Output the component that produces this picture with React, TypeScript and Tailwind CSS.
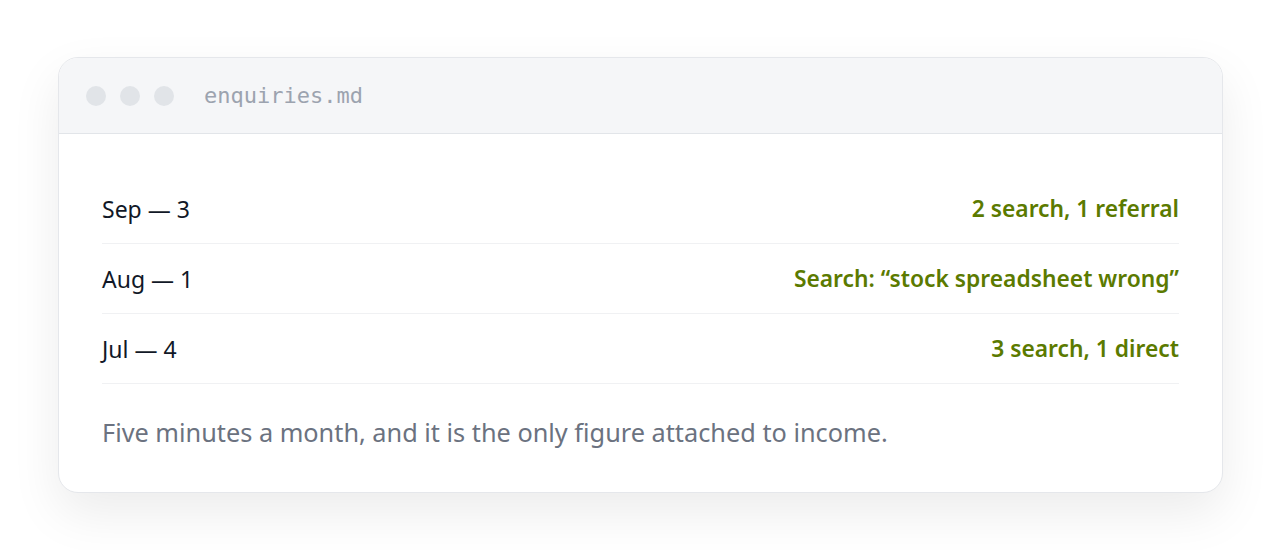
import React from "react";

const rows = [
  { left: "Sep — 3", right: "2 search, 1 referral" },
  { left: "Aug — 1", right: "Search: “stock spreadsheet wrong”" },
  { left: "Jul — 4", right: "3 search, 1 direct" },
];

export default function App() {
  return (
    <div className="w-[1280px] h-[550px] bg-white pt-[57px] pl-[58px] pr-[57px] font-['Noto_Sans',sans-serif]">
      <div className="rounded-[20px] border border-[#e5e7eb] bg-white overflow-hidden shadow-[0_20px_50px_rgba(0,0,0,0.08)]">
        <div className="h-[76px] bg-[#f5f6f8] border-b border-[#e2e5e9] flex items-center pl-[27px] gap-[14px]">
          <span className="w-[20px] h-[20px] rounded-full bg-[#e1e4e8]" />
          <span className="w-[20px] h-[20px] rounded-full bg-[#e1e4e8]" />
          <span className="w-[20px] h-[20px] rounded-full bg-[#e1e4e8]" />
          <span className="ml-[16px] text-[22px] text-[#9ca3af] font-['DejaVu_Sans_Mono',monospace]">enquiries.md</span>
        </div>
        <div className="px-[43px] pt-[40px] pb-[41px]">
          {rows.map((r) => (
            <div key={r.left} className="h-[70px] flex items-center justify-between border-b border-[#f0f1f3] pt-[1px]">
              <span className="text-[#111827] text-[23px]">{r.left}</span>
              <span className="text-[#5b7a00] font-semibold text-[22.8px]">{r.right}</span>
            </div>
          ))}
          <p className="pt-[30px] text-[25.3px] leading-[37px] text-[#6b7280]">Five minutes a month, and it is the only figure attached to income.</p>
        </div>
      </div>
    </div>
  );
}
